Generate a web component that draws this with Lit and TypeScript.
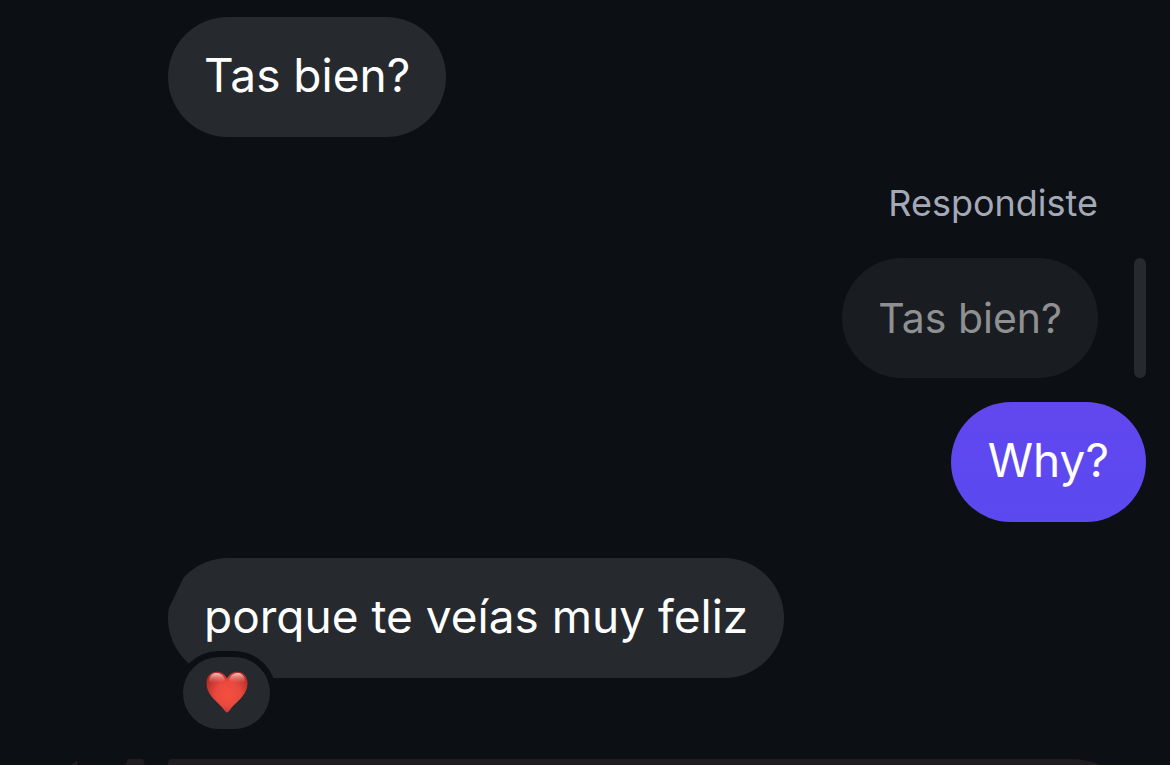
import { LitElement, html, css } from "lit";
import { customElement, property } from "lit/decorators.js";

@customElement("heart-icon")
class HeartIcon extends LitElement {
  static styles = css`
    :host { display: block; width: 42px; height: 42px; }
    svg { display: block; width: 100%; height: 100%; }
  `;
  render() {
    return html`<svg viewBox="0 0 42 42" role="img" aria-label="Me encanta">
      <defs>
        <radialGradient id="body" gradientUnits="userSpaceOnUse" cx="22" cy="23" r="24">
          <stop offset="0" stop-color="#f4503f"></stop>
          <stop offset="0.5" stop-color="#ea493e"></stop>
          <stop offset="1" stop-color="#b42c29"></stop>
        </radialGradient>
        <linearGradient id="shine" x1="0" y1="0" x2="0" y2="1">
          <stop offset="0" stop-color="#ffe0da" stop-opacity="0.85"></stop>
          <stop offset="1" stop-color="#ff8d80" stop-opacity="0"></stop>
        </linearGradient>
      </defs>
      <path fill="url(#body)" d="M21 41.500C19.800 41.500 18.600 39.600 17 37.500C12 31 .5 24.500 .5 12C.5 5 5 .8 10.600 .8C15.200 .8 19 3.500 21 7.500C23 3.500 26.800 .8 31.400 .8C37 .8 41.500 5 41.500 12C41.500 24.500 30 31 25 37.500C23.400 39.600 22.200 41.500 21 41.500Z"></path>
      <path fill="url(#shine)" d="M3 10C3.500 4.500 6.500 2 10.600 2C15 2 17.800 5 18.800 9C16 12.500 6 13.500 3 10Z"></path>
      <path fill="url(#shine)" d="M39 10C38.500 4.500 35.500 2 31.400 2C27 2 24.200 5 23.200 9C26 12.500 36 13.500 39 10Z"></path>
    </svg>`;
  }
}

@customElement("chat-bubble")
class ChatBubble extends LitElement {
  @property({ reflect: true }) kind = "received";
  @property({ type: Boolean }) reacted = false;

  static styles = css`
    :host { display: block; position: relative; width: fit-content; }
    .bubble {
      box-sizing: border-box;
      min-height: 120px;
      padding: 31px 36px 35px;
      border-radius: 60px;
      font-size: 46px;
      line-height: 54px;
      color: #fff;
      background: #26292e;
    }
    .sent { padding: 31px 37px 35px; background: linear-gradient(#6147ee, #5b49f0); }
    .quoted {
      padding: 33px 36px;
      font-size: 41px;
      color: #8f9092;
      background: #191c20;
    }
    .reacted { clip-path: polygon(25px 0, 100% 0, 100% 100%, 0 100%, 0 52px); }
    .badge {
      position: absolute;
      left: 9px;
      bottom: -57px;
      display: flex;
      align-items: center;
      justify-content: center;
      box-sizing: border-box;
      width: 99px;
      height: 84px;
      padding: 0 0 2px;
      border: 6px solid #0c0f13;
      border-radius: 42px;
      background: #26292e;
    }
  `;
  render() {
    return html`
      <div class="bubble ${this.kind} ${this.reacted ? "reacted" : ""}"><slot></slot></div>
      ${this.reacted ? html`<div class="badge"><heart-icon></heart-icon></div>` : ""}
    `;
  }
}

@customElement("app-root")
class AppRoot extends LitElement {
  static styles = css`
    :host {
      display: block;
      height: 100vh;
      overflow: hidden;
      background: #0c0f13;
      font-family: Inter, "Noto Sans", sans-serif;
    }
    .thread {
      display: flex;
      flex-direction: column;
      align-items: flex-start;
      padding: 17px 24px 0 168px;
    }
    .reply {
      display: flex;
      flex-direction: column;
      align-items: flex-end;
      align-self: flex-end;
      gap: 24px;
      margin: 43px 0 36px;
    }
    .label {
      margin: 0 48px 8px 0;
      font-size: 36px;
      line-height: 46px;
      color: #a4a9b8;
    }
    .quote { display: flex; gap: 36px; }
    .bar { width: 12px; border-radius: 6px; background: #26292e; }
    .next {
      display: flex;
      align-items: flex-start;
      margin-top: 81px;
      padding: 0 24px 0 72px;
    }
    .avatar { width: 73px; height: 73px; }
    .avatar svg { display: block; }
    .card {
      flex: 1;
      height: 120px;
      margin: 0 0 0 23px;
      border-radius: 6px 100px 60px 60px;
      background: #1f1d20;
    }
  `;
  render() {
    return html`
      <main class="thread">
        <chat-bubble>Tas bien?</chat-bubble>
        <section class="reply">
          <p class="label">Respondiste</p>
          <div class="quote">
            <chat-bubble kind="quoted">Tas bien?</chat-bubble>
            <div class="bar"></div>
          </div>
          <chat-bubble kind="sent">Why?</chat-bubble>
        </section>
        <chat-bubble reacted>porque te veías muy feliz</chat-bubble>
      </main>
      <div class="next">
        <div class="avatar">
          <svg width="73" height="73" viewBox="0 0 73 73" aria-hidden="true">
            <path fill="#1f1d20" d="M0 6Q1 3 6 2L5 6ZM56 0H71L73 6H53Z"></path>
          </svg>
        </div>
        <div class="card"></div>
      </div>
    `;
  }
}
